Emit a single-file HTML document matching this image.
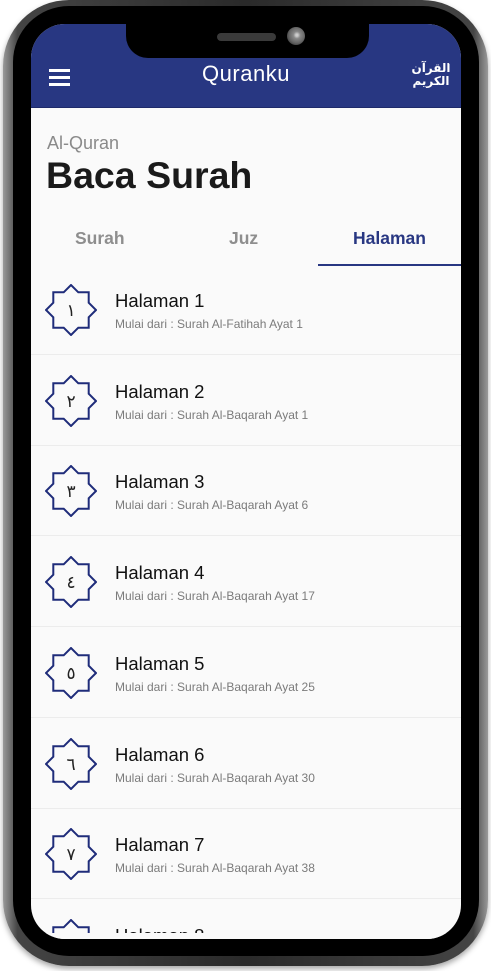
<!DOCTYPE html>
<html><head><meta charset="utf-8">
<style>
html,body{margin:0;padding:0;background:#fff;}
body{width:491px;height:971px;position:relative;overflow:hidden;font-family:"Liberation Sans","DejaVu Sans",sans-serif;}
.shell{position:absolute;left:3px;top:0;width:485px;height:966px;border-radius:66px;background:linear-gradient(90deg,#9a9a9a,#444 3%,#2a2a2a 50%,#444 97%,#9a9a9a);box-shadow:0 3px 6px rgba(0,0,0,.35);}
.bezel{position:absolute;left:13px;top:6px;width:466px;height:950px;border-radius:56px;background:#000;}
.screen{position:absolute;left:31px;top:24px;width:430px;height:915px;border-radius:34px;background:#fafafa;overflow:hidden;}
.header{position:absolute;left:0;top:0;width:430px;height:83px;background:#283782;border-bottom:1px solid #1e2a6a;}
.notch{position:absolute;left:95px;top:-2px;width:243px;height:36px;background:#000;border-radius:0 0 22px 22px;}
.speaker{position:absolute;left:91px;top:11px;width:59px;height:8px;border-radius:4px;background:#3a3a3a;}
.cam{position:absolute;left:161px;top:5px;width:18px;height:18px;border-radius:50%;background:radial-gradient(circle at 55% 45%,#ccc 8%,#888 25%,#666 55%,#444 75%);}
.menu{position:absolute;left:18px;top:45px;width:21px;}
.menu i{display:block;height:2.5px;background:#fff;margin-bottom:4.5px;}
.title{position:absolute;left:0;width:430px;top:37px;text-align:center;color:#fff;font-size:22px;letter-spacing:.5px;}
.logo{position:absolute;left:377px;top:31px;width:46px;height:44px;border-radius:50%;color:#fff;font-family:"DejaVu Sans",sans-serif;font-size:12px;line-height:13px;text-align:center;overflow:hidden;padding-top:7px;box-sizing:border-box;font-weight:bold;}
.sub{position:absolute;left:16px;top:109px;color:#8a8a8a;font-size:18px;}
.big{position:absolute;left:15px;top:130px;color:#1a1a1a;font-size:37.5px;font-weight:bold;}
.tab{position:absolute;top:204px;font-size:17.5px;font-weight:bold;color:#8e8e8e;}
.uline{position:absolute;left:287px;top:240px;width:143px;height:2px;background:#283782;}
.row{position:absolute;left:0;width:430px;height:90px;border-bottom:1px solid #ececec;}
.row svg{position:absolute;left:14px;top:20px;}
.h{position:absolute;left:84px;top:26px;font-size:18.5px;color:#111;}
.m{position:absolute;left:84px;top:53px;font-size:12px;color:#7b7b7b;}
</style></head><body>
<div class="shell"></div>
<div class="bezel"></div>
<div class="screen">
  <div class="header">
    <div class="menu"><i></i><i></i><i></i></div>
    <div class="title">Quranku</div>
    <div class="logo">القرآن<br>الكريم</div>
  </div>
  <div class="sub">Al-Quran</div>
  <div class="big">Baca Surah</div>
  <div class="tab" style="left:44px">Surah</div>
  <div class="tab" style="left:198px">Juz</div>
  <div class="tab" style="left:322px;color:#283782">Halaman</div>
  <div class="uline"></div>
</div>

<div style="position:absolute;left:31px;top:24px;width:430px;height:915px;border-radius:34px;overflow:hidden;pointer-events:none">
<div class="row" style="top:240px"><svg width="52" height="52" viewBox="-26 -26 52 52"><polygon points="25,0 17.7,7.3 17.7,17.7 7.3,17.7 0,25 -7.3,17.7 -17.7,17.7 -17.7,7.3 -25,0 -17.7,-7.3 -17.7,-17.7 -7.3,-17.7 0,-25 7.3,-17.7 17.7,-17.7 17.7,-7.3" fill="none" stroke="#1f2c7a" stroke-width="2"/><text x="0" y="6" text-anchor="middle" font-size="17" fill="#222" font-family="DejaVu Sans">١</text></svg><div class="h">Halaman 1</div><div class="m">Mulai dari : Surah Al-Fatihah Ayat 1</div></div>
<div class="row" style="top:330.7px"><svg width="52" height="52" viewBox="-26 -26 52 52"><polygon points="25,0 17.7,7.3 17.7,17.7 7.3,17.7 0,25 -7.3,17.7 -17.7,17.7 -17.7,7.3 -25,0 -17.7,-7.3 -17.7,-17.7 -7.3,-17.7 0,-25 7.3,-17.7 17.7,-17.7 17.7,-7.3" fill="none" stroke="#1f2c7a" stroke-width="2"/><text x="0" y="6" text-anchor="middle" font-size="17" fill="#222" font-family="DejaVu Sans">٢</text></svg><div class="h">Halaman 2</div><div class="m">Mulai dari : Surah Al-Baqarah Ayat 1</div></div>
<div class="row" style="top:421.4px"><svg width="52" height="52" viewBox="-26 -26 52 52"><polygon points="25,0 17.7,7.3 17.7,17.7 7.3,17.7 0,25 -7.3,17.7 -17.7,17.7 -17.7,7.3 -25,0 -17.7,-7.3 -17.7,-17.7 -7.3,-17.7 0,-25 7.3,-17.7 17.7,-17.7 17.7,-7.3" fill="none" stroke="#1f2c7a" stroke-width="2"/><text x="0" y="6" text-anchor="middle" font-size="17" fill="#222" font-family="DejaVu Sans">٣</text></svg><div class="h">Halaman 3</div><div class="m">Mulai dari : Surah Al-Baqarah Ayat 6</div></div>
<div class="row" style="top:512.1px"><svg width="52" height="52" viewBox="-26 -26 52 52"><polygon points="25,0 17.7,7.3 17.7,17.7 7.3,17.7 0,25 -7.3,17.7 -17.7,17.7 -17.7,7.3 -25,0 -17.7,-7.3 -17.7,-17.7 -7.3,-17.7 0,-25 7.3,-17.7 17.7,-17.7 17.7,-7.3" fill="none" stroke="#1f2c7a" stroke-width="2"/><text x="0" y="6" text-anchor="middle" font-size="17" fill="#222" font-family="DejaVu Sans">٤</text></svg><div class="h">Halaman 4</div><div class="m">Mulai dari : Surah Al-Baqarah Ayat 17</div></div>
<div class="row" style="top:602.8px"><svg width="52" height="52" viewBox="-26 -26 52 52"><polygon points="25,0 17.7,7.3 17.7,17.7 7.3,17.7 0,25 -7.3,17.7 -17.7,17.7 -17.7,7.3 -25,0 -17.7,-7.3 -17.7,-17.7 -7.3,-17.7 0,-25 7.3,-17.7 17.7,-17.7 17.7,-7.3" fill="none" stroke="#1f2c7a" stroke-width="2"/><text x="0" y="6" text-anchor="middle" font-size="17" fill="#222" font-family="DejaVu Sans">٥</text></svg><div class="h">Halaman 5</div><div class="m">Mulai dari : Surah Al-Baqarah Ayat 25</div></div>
<div class="row" style="top:693.5px"><svg width="52" height="52" viewBox="-26 -26 52 52"><polygon points="25,0 17.7,7.3 17.7,17.7 7.3,17.7 0,25 -7.3,17.7 -17.7,17.7 -17.7,7.3 -25,0 -17.7,-7.3 -17.7,-17.7 -7.3,-17.7 0,-25 7.3,-17.7 17.7,-17.7 17.7,-7.3" fill="none" stroke="#1f2c7a" stroke-width="2"/><text x="0" y="6" text-anchor="middle" font-size="17" fill="#222" font-family="DejaVu Sans">٦</text></svg><div class="h">Halaman 6</div><div class="m">Mulai dari : Surah Al-Baqarah Ayat 30</div></div>
<div class="row" style="top:784.2px"><svg width="52" height="52" viewBox="-26 -26 52 52"><polygon points="25,0 17.7,7.3 17.7,17.7 7.3,17.7 0,25 -7.3,17.7 -17.7,17.7 -17.7,7.3 -25,0 -17.7,-7.3 -17.7,-17.7 -7.3,-17.7 0,-25 7.3,-17.7 17.7,-17.7 17.7,-7.3" fill="none" stroke="#1f2c7a" stroke-width="2"/><text x="0" y="6" text-anchor="middle" font-size="17" fill="#222" font-family="DejaVu Sans">٧</text></svg><div class="h">Halaman 7</div><div class="m">Mulai dari : Surah Al-Baqarah Ayat 38</div></div>
<div class="row" style="top:874.9px;border:none"><svg width="52" height="52" viewBox="-26 -26 52 52"><polygon points="25,0 17.7,7.3 17.7,17.7 7.3,17.7 0,25 -7.3,17.7 -17.7,17.7 -17.7,7.3 -25,0 -17.7,-7.3 -17.7,-17.7 -7.3,-17.7 0,-25 7.3,-17.7 17.7,-17.7 17.7,-7.3" fill="none" stroke="#1f2c7a" stroke-width="2"/></svg><div class="h">Halaman 8</div></div>
<div style="position:absolute;left:0;top:909px;width:430px;height:10px;background:#fafafa"></div>
<div class="notch"><div class="speaker"></div><div class="cam"></div></div>
</div>
</body></html>
